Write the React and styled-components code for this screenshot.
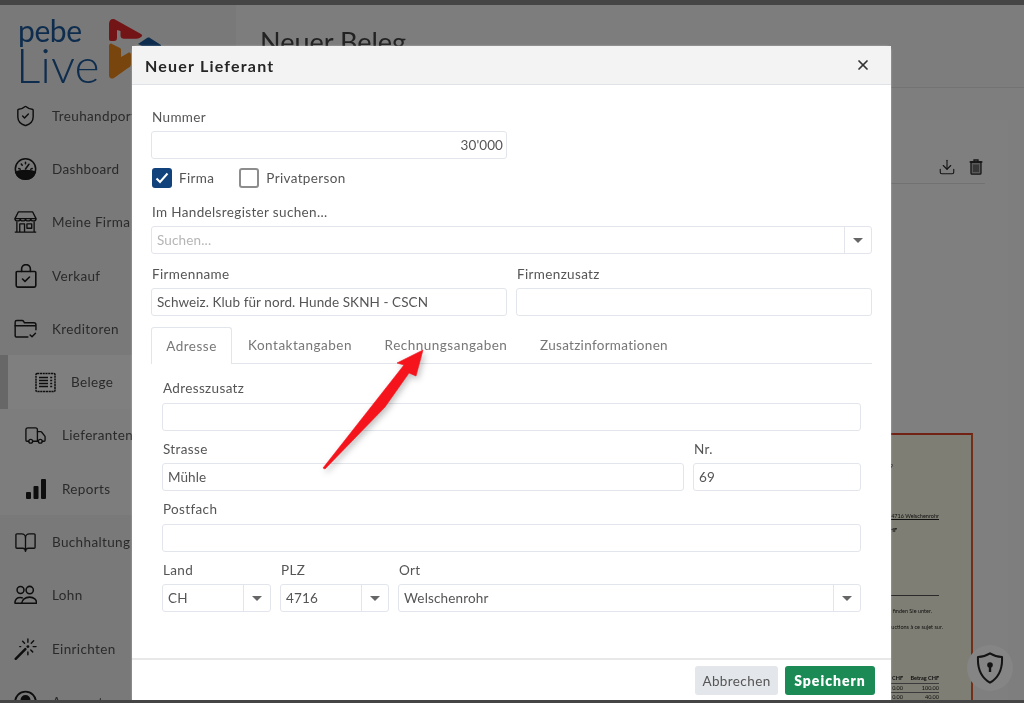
import React from "react";
import styled, { createGlobalStyle } from "styled-components";
import { ShieldCheck, BookOpen, Truck, X, Download } from "lucide-react";

const GlobalStyle = createGlobalStyle`
  html, body {
    margin: 0;
    padding: 0;
    background: #3f3f3f;
  }
  * {
    box-sizing: border-box;
  }
`;

const FONT = `"Lato", "Open Sans", sans-serif`;

const Page = styled.div`
  width: 1024px;
  height: 703px;
  overflow: hidden;
  display: flex;
  flex-direction: column;
  font-family: ${FONT};
  filter: blur(0.35px);
`;

const Strip = styled.div`
  height: ${(p) => p.$height}px;
  flex: none;
  background: #454545;
`;

const Stage = styled.div`
  flex: 1;
  min-height: 0;
  position: relative;
  display: flex;
  overflow: hidden;
`;

const Backdrop = styled.div`
  position: absolute;
  inset: 0;
  background: rgba(0, 0, 0, 0.5);
`;

/* sidebar */
const Sidebar = styled.aside`
  width: 236px;
  flex: none;
  background: #f3f3f3;
  display: flex;
  flex-direction: column;
`;

const LogoBox = styled.div`
  height: 84px;
  flex: none;
  padding: 12px 0 0 16px;
  display: flex;
`;

const LogoWords = styled.div`
  width: 92px;
  flex: none;
  display: flex;
  flex-direction: column;
  color: #1c5a9c;
`;

const LogoSmall = styled.span`
  font-size: 30px;
  line-height: 26px;
  padding-left: 2px;
  letter-spacing: -0.4px;
`;

const LogoBig = styled.span`
  font-size: 48px;
  line-height: 44px;
  font-weight: 300;
`;

const NavGroup = styled.div`
  background: #fbfbfb;
  display: flex;
  flex-direction: column;
`;

const NavRow = styled.div`
  height: 53.3px;
  flex: none;
  display: flex;
  align-items: center;
  gap: ${(p) => (p.$active ? 14 : 15)}px;
  padding-left: ${(p) => p.$indent || 14}px;
  font-size: 13.5px;
  letter-spacing: 0.35px;
  color: #555;
  white-space: nowrap;
  background: ${(p) => (p.$active ? "#ffffff" : "transparent")};
  border-left: ${(p) => (p.$active ? "8px solid #cfcfcf" : "none")};
`;

const NavIcon = styled.span`
  width: 23px;
  height: 24px;
  flex: none;
  display: flex;
  align-items: center;
  justify-content: center;
  color: #1c1c1c;
`;

/* main area behind the modal */
const Main = styled.main`
  flex: 1;
  min-width: 0;
  background: #fdfdfd;
  display: flex;
  flex-direction: column;
`;

const MainHead = styled.header`
  height: 83px;
  flex: none;
  padding: 20px 0 0 24px;
  background: #fafafa;
  border-bottom: 1px solid #e6e6e6;
  font-size: 27px;
  color: #444;
`;

const MainBody = styled.div`
  flex: 1;
  min-height: 0;
  padding: 32px 16px 0 0;
  display: flex;
`;

const Card = styled.section`
  flex: 1;
  background: #ffffff;
  padding: 32px 23px 0 16px;
  display: flex;
  flex-direction: column;
`;

const ToolRow = styled.div`
  height: 32px;
  flex: none;
  display: flex;
  align-items: center;
  justify-content: flex-end;
  gap: 13px;
  padding: 0 2px 2px 0;
  border-bottom: 1px solid #e2e2e2;
  color: #2a2a2a;
`;

const Sheet = styled.div`
  align-self: flex-end;
  width: 240px;
  height: 400px;
  flex: none;
  margin: 249px 12px 0 0;
  background: #fffce8;
  border-top: 2px solid #e2452a;
  border-right: 2px solid #e2602f;
  display: flex;
  flex-direction: column;
  align-items: flex-end;
  color: #222;
  font-size: 5.5px;
  white-space: nowrap;
`;

const SheetLine = styled.div`
  margin-top: ${(p) => p.$top}px;
  padding-right: ${(p) => p.$right}px;
  font-weight: ${(p) => (p.$bold ? 700 : 400)};
  text-decoration: ${(p) => (p.$under ? "underline" : "none")};
`;

const SheetRule = styled.div`
  margin-top: ${(p) => p.$top}px;
  margin-right: 32px;
  width: 120px;
  height: 1px;
  background: #555;
`;

const SheetTable = styled.div`
  margin-top: 44px;
  margin-right: 32px;
  width: 110px;
  display: grid;
  grid-template-columns: 1fr 36px;
  text-align: right;
`;

const SheetCell = styled.div`
  font-weight: ${(p) => (p.$head ? 700 : 400)};
  border-bottom: 1px solid #777;
  height: 9.5px;
  line-height: 9px;
`;

const LockButton = styled.div`
  position: absolute;
  left: 967px;
  top: 640px;
  width: 46px;
  height: 46px;
  border-radius: 50%;
  background: #858585;
  display: flex;
  align-items: center;
  justify-content: center;
  color: #141414;
`;

/* modal */
const Modal = styled.div`
  position: absolute;
  left: 132px;
  top: 41px;
  width: 759px;
  height: 654px;
  background: #fff;
  border-radius: 5px 5px 0 0;
  display: flex;
  flex-direction: column;
  color: #555;
  font-size: 13.5px;
  letter-spacing: 0.35px;
  box-shadow: 0 0 2px rgba(255, 255, 255, 0.5);
`;

const ModalHead = styled.div`
  height: 39px;
  flex: none;
  padding: 0 20px 0 13px;
  display: flex;
  align-items: center;
  justify-content: space-between;
  background: #f3f3f3;
  border-bottom: 1px solid #dfe3e8;
  color: #333;
`;

const ModalTitle = styled.h2`
  margin: 0;
  font-size: 16px;
  font-weight: 700;
  letter-spacing: 1.2px;
  color: #262626;
`;

const ModalBody = styled.div`
  flex: 1;
  min-height: 0;
  padding: 23px 19px 0;
  display: flex;
  flex-direction: column;
`;

const ModalFoot = styled.div`
  height: 42px;
  flex: none;
  border-top: 2px solid #e8e8e8;
  padding-top: 6px;
  padding-right: 16px;
  display: flex;
  justify-content: flex-end;
  gap: 7px;
`;

const Button = styled.button`
  height: 29px;
  width: ${(p) => p.$width}px;
  border: none;
  border-radius: 3px;
  font-family: ${FONT};
  font-size: ${(p) => (p.$primary ? 14 : 13.5)}px;
  font-weight: ${(p) => (p.$primary ? 800 : 400)};
  letter-spacing: ${(p) => (p.$primary ? 1 : 0.4)}px;
  background: ${(p) => (p.$primary ? "#1c8a55" : "#e3e6ea")};
  color: ${(p) => (p.$primary ? "#fff" : "#555")};
`;

const Field = styled.div`
  display: flex;
  flex-direction: column;
  min-width: 0;
  flex: ${(p) => (p.$grow ? 1 : "none")};
  width: ${(p) => (p.$width ? `${p.$width}px` : "auto")};
`;

const Label = styled.label`
  height: 18px;
  line-height: 18px;
  margin-bottom: 5px;
  padding-left: 1px;
  color: #555;
`;

const Input = styled.div`
  height: 28px;
  line-height: 26px;
  padding: ${(p) => (p.$right ? "0 3px 0 5px" : "0 5px")};
  border: 1px solid #e2e6ec;
  border-radius: 3px;
  background: #fff;
  text-align: ${(p) => (p.$right ? "right" : "left")};
  letter-spacing: 0.08px;
  color: #555;
  white-space: nowrap;
  overflow: hidden;
`;

const SelectBox = styled.div`
  height: 28px;
  display: flex;
  border: 1px solid #e2e6ec;
  border-radius: 3px;
  background: #fff;
`;

const SelectValue = styled.div`
  flex: 1;
  min-width: 0;
  line-height: 26px;
  padding: 0 5px;
  letter-spacing: 0.15px;
  color: ${(p) => (p.$muted ? "#b5b5b5" : "#555")};
`;

const SelectCaret = styled.div`
  width: 27px;
  flex: none;
  border-left: 1px solid #e2e6ec;
  display: flex;
  align-items: center;
  justify-content: center;

  &::after {
    content: "";
    border-left: 5px solid transparent;
    border-right: 5px solid transparent;
    border-top: 5px solid #666;
  }
`;

const Row = styled.div`
  display: flex;
  gap: ${(p) => p.$gap || 9}px;
  margin-top: ${(p) => p.$top || 0}px;
`;

const NumberField = styled(Field)`
  width: 356px;
`;

const CheckRow = styled.div`
  display: flex;
  align-items: center;
  height: 20px;
  margin: 9px 0 15px 1px;
`;

const CheckLabel = styled.span`
  margin: 0 25px 0 7px;
`;

const CheckBox = styled.span`
  width: 20px;
  height: 20px;
  flex: none;
  border-radius: 3px;
  display: flex;
  align-items: center;
  justify-content: center;
  background: ${(p) => (p.$on ? "#11427c" : "#fff")};
  border: ${(p) => (p.$on ? "none" : "2px solid #8d8d8d")};
`;

const TabBar = styled.div`
  display: flex;
  height: 37px;
  margin-top: 11px;
  border-bottom: 1px solid #e2e6ec;
`;

const Tab = styled.div`
  height: ${(p) => (p.$active ? 37 : 36)}px;
  line-height: 36px;
  width: ${(p) => p.$width}px;
  text-align: center;
  letter-spacing: ${(p) => p.$spacing || 0.5}px;
  color: #777;
  background: #fff;
  border: ${(p) => (p.$active ? "1px solid #e2e6ec" : "none")};
  border-bottom: none;
  border-radius: 3px 3px 0 0;
`;

const TabPane = styled.div`
  padding: 15px 11px 0;
  display: flex;
  flex-direction: column;
  gap: 9px;

  ${Label} {
    margin-bottom: 5.5px;
  }
`;

const Arrow = styled.svg`
  position: absolute;
  left: 0;
  top: 0;
  width: 1024px;
  height: 695px;
  pointer-events: none;
  filter: drop-shadow(2px 3px 3px rgba(0, 0, 0, 0.25));
`;

function Gauge() {
  return (
    <svg width="24" height="24" viewBox="0 0 24 24" fill="none" stroke="currentColor" strokeWidth="1.6">
      <circle cx="12" cy="12" r="10.6" />
      <path d="M1.8 15.5c3-2.6 17.4-2.6 20.4 0C20.8 20 16.8 22.6 12 22.6S3.2 20 1.8 15.5z" fill="currentColor" />
      <path d="M12 12l3.6-5M5 11.5l1.5.6M7.6 6.8l1 1.2M12 5v1.6M19 11.5l-1.5.6" strokeLinecap="round" />
    </svg>
  );
}

function Shop() {
  return (
    <svg width="24" height="24" viewBox="0 0 24 24" fill="none" stroke="currentColor" strokeWidth="1.4" strokeLinejoin="round">
      <path d="M4.500 1.500h15L23 8.500H1z" />
      <path d="M1 8.500c0 3.200 5.500 3.200 5.500 0 0 3.200 5.500 3.200 5.500 0 0 3.200 5.500 3.200 5.500 0 0 3.200 5.500 3.200 5.500 0" />
      <path d="M3 11.500v10.500M21 11.500v10.500M.8 22.600h22.400" />
      <path d="M6 22.500v-8.500h5v8.500" />
      <rect x="13.500" y="14" width="5" height="4.500" />
    </svg>
  );
}

function Bag() {
  return (
    <svg width="22" height="24" viewBox="0 0 22 24" fill="none" stroke="currentColor" strokeWidth="1.6" strokeLinejoin="round" strokeLinecap="round">
      <path d="M2.2 7.5h17.6c.6 0 1 .4 1 1v13c0 .9-.7 1.6-1.6 1.6H2.8c-.9 0-1.6-.7-1.6-1.6v-13c0-.6.4-1 1-1z" />
      <path d="M6.6 7.5V5a4.4 4.4 0 0 1 8.8 0v2.5" />
      <path d="M7.5 15l2.5 2.4 4.5-4.4" />
    </svg>
  );
}

function FolderTick() {
  return (
    <svg width="24" height="20" viewBox="0 0 24 20" fill="none" stroke="currentColor" strokeWidth="1.5" strokeLinecap="round" strokeLinejoin="round">
      <path d="M14.5 18.4H3.2c-1.2 0-2-.8-2-2V3c0-1 .7-1.8 1.8-1.8h5.4c.8 0 1.4.4 1.8 1.1l.7 1.2h9.8c1.3 0 2.2 1 2.2 2.2v5" />
      <path d="M1.2 6.6h21" />
      <path d="M16.8 16.2l2 2 3.6-3.8" />
    </svg>
  );
}

function Receipt() {
  return (
    <svg width="21" height="21" viewBox="0 0 21 21" fill="none" stroke="currentColor" strokeWidth="1.5">
      <rect x="1" y="1.4" width="19" height="18.2" rx="1" strokeDasharray="2.2 .6" />
      <path d="M4 5.5h9M4 8.5h9M4 11.5h9M4 14.5h9M15.2 5.5h2M15.2 8.5h2M15.2 11.5h2M15.2 14.5h2" />
    </svg>
  );
}

function Bars() {
  return (
    <svg width="22" height="22" viewBox="0 0 22 22" fill="currentColor">
      <rect x="1" y="14" width="5" height="7" rx="1" />
      <rect x="8.5" y="8" width="5" height="13" rx="1" />
      <rect x="16" y="1" width="5" height="20" rx="1" />
    </svg>
  );
}

function People() {
  return (
    <svg width="24" height="20" viewBox="0 0 24 20" fill="none" stroke="currentColor" strokeWidth="1.6" strokeLinejoin="round">
      <circle cx="6.8" cy="4.8" r="3.6" />
      <circle cx="16.4" cy="4.8" r="3.8" />
      <path d="M8.4 18.6H1.6c-.5 0-.8-.4-.7-.9.4-3 2.6-5.2 5.6-5.2 1 0 1.9.2 2.7.7" />
      <path d="M8 18.6c.3-3.6 3.8-6.4 8.2-6.4s7.900 2.800 7.100 6.400z" />
    </svg>
  );
}

function Wand() {
  return (
    <svg width="24" height="24" viewBox="0 0 24 24" fill="none" stroke="currentColor" strokeLinecap="round">
      <path d="M1.800 22.200l10-10" strokeWidth="2.600" />
      <path d="M14.500 1.500v3.500M14.500 15v3M20 9.500h3M7 9.500h-1M9 4l2 2M20.500 3.500l-2.500 2.500M19.500 15l-2-2" strokeWidth="1.500" />
      <circle cx="14.500" cy="9.500" r="1.500" fill="currentColor" stroke="none" />
    </svg>
  );
}

function Account() {
  return (
    <svg width="24" height="24" viewBox="0 0 24 24" fill="none" stroke="currentColor" strokeWidth="2">
      <circle cx="12" cy="12" r="10.800" />
      <circle cx="12" cy="10" r="4.200" fill="currentColor" />
    </svg>
  );
}

function Trash() {
  return (
    <svg width="14" height="16" viewBox="0 0 14 16" fill="none" stroke="currentColor" strokeWidth="1.300">
      <path d="M.6 3h12.800M5 3V1h4v2" />
      <path d="M2 3v11.200c0 .6.400 1 1 1h8c.6 0 1-.400 1-1V3z" fill="currentColor" fillOpacity=".35" />
      <path d="M5 5.500v7.500M7 5.500v7.500M9 5.500v7.500" strokeWidth="1" />
    </svg>
  );
}

function LockShield() {
  return (
    <svg width="28" height="32" viewBox="0 0 28 32" fill="none" stroke="currentColor" strokeWidth="2" strokeLinejoin="round">
      <path d="M14 1.300c3.500 2.200 7.500 3.400 12 3.600.6 10.800-3 20.400-12 25.800C5 25.300 1.400 15.700 2 4.900c4.500-.2 8.500-1.400 12-3.600z" />
      <circle cx="14" cy="13" r="2.800" fill="currentColor" stroke="none" />
      <path d="M14 14v6" strokeWidth="2.400" />
    </svg>
  );
}

function LogoMark() {
  return (
    <svg width="54" height="62" viewBox="0 0 54 62" style={{ flex: "none", marginTop: 1 }}>
      <path d="M1 6c0-4 3-6 6-4.500L33 16c1.500 1 1.500 2 0 3l-1.500 1c-1 .6-2 .8-3 .8H16c-2 0-3.500-1-3.500-3V13L9 12v8c0 2-1 3-3 3H3c-1.500 0-2-1-2-2z" fill="#e62a2e" />
      <path d="M1 28c0-2 1.500-3 3-2l8 4c1 .6 1 2 1 3v6l7-4c2-1 3 0 3 2v9c0 2-1 3-3 4L6 60c-3 1.500-5 0-5-3z" fill="#ee8a1a" />
      <path d="M30 26l9-6c1-.6 2-.6 3 0l11 7v3H38z" fill="#1c5a9c" />
    </svg>
  );
}

const NAV_TOP = [
  { label: "Treuhandportal", icon: <ShieldCheck size={24} strokeWidth={1.5} /> },
  { label: "Dashboard", icon: <Gauge /> },
  { label: "Meine Firma", icon: <Shop /> },
  { label: "Verkauf", icon: <Bag /> },
  { label: "Kreditoren", icon: <FolderTick /> },
];

const NAV_BOTTOM = [
  { label: "Buchhaltung", icon: <BookOpen size={25} strokeWidth={1.4} /> },
  { label: "Lohn", icon: <People /> },
  { label: "Einrichten", icon: <Wand /> },
  { label: "Accounts", icon: <Account /> },
];

function App() {
  return (
    <Page>
      <GlobalStyle />
      <Strip $height={5} />
      <Stage>
        <Sidebar>
          <LogoBox>
            <LogoWords>
              <LogoSmall>pebe</LogoSmall>
              <LogoBig>Live</LogoBig>
            </LogoWords>
            <LogoMark />
          </LogoBox>
          {NAV_TOP.map((item) => (
            <NavRow key={item.label}>
              <NavIcon>{item.icon}</NavIcon>
              {item.label}
            </NavRow>
          ))}
          <NavGroup>
            <NavRow $active $indent={26}>
              <NavIcon><Receipt /></NavIcon>
              Belege
            </NavRow>
            <NavRow $indent={24}>
              <NavIcon><Truck size={25} strokeWidth={1.4} /></NavIcon>
              Lieferanten
            </NavRow>
            <NavRow $indent={24}>
              <NavIcon><Bars /></NavIcon>
              Reports
            </NavRow>
          </NavGroup>
          {NAV_BOTTOM.map((item) => (
            <NavRow key={item.label}>
              <NavIcon>{item.icon}</NavIcon>
              {item.label}
            </NavRow>
          ))}
        </Sidebar>

        <Main>
          <MainHead>Neuer Beleg</MainHead>
          <MainBody>
            <Card>
              <ToolRow>
                <Download size={18} strokeWidth={1.5} />
                <Trash />
              </ToolRow>
              <Sheet>
                <SheetLine $top={28} $right={78}>69</SheetLine>
                <SheetLine $top={44} $right={32} $under>Mühle 69, 4716 Welschenrohr</SheetLine>
                <SheetLine $top={8} $right={74} $bold>CHF</SheetLine>
                <SheetRule $top={62} />
                <SheetLine $top={12} $right={39}>zu finden Sie unter.</SheetLine>
                <SheetLine $top={10} $right={28}>instructions à ce sujet sur.</SheetLine>
                <SheetTable>
                  <SheetCell $head>CHF</SheetCell>
                  <SheetCell $head>Betrag CHF</SheetCell>
                  <SheetCell>0.00</SheetCell>
                  <SheetCell>100.00</SheetCell>
                  <SheetCell>0.00</SheetCell>
                  <SheetCell>40.00</SheetCell>
                </SheetTable>
              </Sheet>
            </Card>
          </MainBody>
        </Main>

        <Backdrop />
        <LockButton><LockShield /></LockButton>

        <Modal>
          <ModalHead>
            <ModalTitle>Neuer Lieferant</ModalTitle>
            <X size={16} strokeWidth={2.6} />
          </ModalHead>
          <ModalBody>
            <NumberField>
              <Label>Nummer</Label>
              <Input $right>30'000</Input>
            </NumberField>
            <CheckRow>
              <CheckBox $on>
                <svg width="14" height="12" viewBox="0 0 14 12" fill="none" stroke="#fff" strokeWidth="2">
                  <path d="M1.500 6.500l3.500 3.500 7.500-8.500" />
                </svg>
              </CheckBox>
              <CheckLabel>Firma</CheckLabel>
              <CheckBox />
              <CheckLabel>Privatperson</CheckLabel>
            </CheckRow>
            <Field>
              <Label>Im Handelsregister suchen...</Label>
              <SelectBox>
                <SelectValue $muted>Suchen...</SelectValue>
                <SelectCaret />
              </SelectBox>
            </Field>
            <Row $top={11}>
              <Field $grow>
                <Label>Firmenname</Label>
                <Input>Schweiz. Klub für nord. Hunde SKNH - CSCN</Input>
              </Field>
              <Field $grow>
                <Label>Firmenzusatz</Label>
                <Input />
              </Field>
            </Row>
            <TabBar>
              <Tab $active $width={81}>Adresse</Tab>
              <Tab $width={136}>Kontaktangaben</Tab>
              <Tab $width={156}>Rechnungsangaben</Tab>
              <Tab $width={160} $spacing={0.3}>Zusatzinformationen</Tab>
            </TabBar>
            <TabPane>
              <Field>
                <Label>Adresszusatz</Label>
                <Input />
              </Field>
              <Row>
                <Field $grow>
                  <Label>Strasse</Label>
                  <Input>Mühle</Input>
                </Field>
                <Field $width={168}>
                  <Label>Nr.</Label>
                  <Input>69</Input>
                </Field>
              </Row>
              <Field>
                <Label>Postfach</Label>
                <Input />
              </Field>
              <Row>
                <Field $width={109}>
                  <Label>Land</Label>
                  <SelectBox>
                    <SelectValue>CH</SelectValue>
                    <SelectCaret />
                  </SelectBox>
                </Field>
                <Field $width={109}>
                  <Label>PLZ</Label>
                  <SelectBox>
                    <SelectValue>4716</SelectValue>
                    <SelectCaret />
                  </SelectBox>
                </Field>
                <Field $grow>
                  <Label>Ort</Label>
                  <SelectBox>
                    <SelectValue>Welschenrohr</SelectValue>
                    <SelectCaret />
                  </SelectBox>
                </Field>
              </Row>
            </TabPane>
          </ModalBody>
          <ModalFoot>
            <Button $width={83}>Abbrechen</Button>
            <Button $primary $width={90}>Speichern</Button>
          </ModalFoot>
        </Modal>

        <Arrow viewBox="0 0 1024 695">
          <polygon
            points="423,345 397,358 404,360 323,463 325,464 385,402 409,368 416,371"
            fill="#f5141c"
            stroke="#f5141c"
            strokeWidth="0.6"
            strokeLinejoin="round"
          />
        </Arrow>
      </Stage>
      <Strip $height={3} />
    </Page>
  );
}

export default App;
